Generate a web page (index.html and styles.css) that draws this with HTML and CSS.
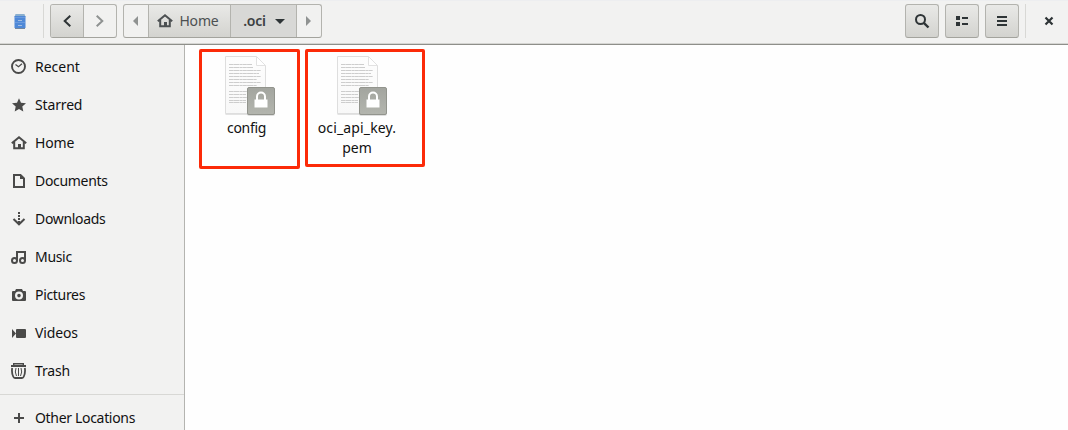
FILE: index.html
```html
<!DOCTYPE html>
<html lang="en">
<head>
<meta charset="utf-8">
<title>.oci</title>
<link rel="stylesheet" href="styles.css">
</head>
<body>
<svg class="defs" width="0" height="0">
  <defs>
    <linearGradient id="lockbg" x1="0" y1="0" x2="0" y2="1"><stop offset="0" stop-color="#a3a59f"/><stop offset="1" stop-color="#b3b5ae"/></linearGradient>
    <linearGradient id="paper" x1="0" y1="0" x2="0" y2="1"><stop offset="0" stop-color="#fdfdfd"/><stop offset="1" stop-color="#f8f8f8"/></linearGradient>
    <symbol id="home" viewBox="0 0 16 16"><path d="M.8 8.200 8 2.200l7.200 6M3.200 7v6.200h9.600V7" fill="none" stroke="currentColor" stroke-width="2"/><path d="M7 9h3v4H7z" fill="currentColor"/></symbol>
    <symbol id="file" viewBox="0 0 52 62">
      <path d="M1.500 1.500h31l9 9v48.500h-40z" fill="#bbb" opacity=".4"/>
      <path d="M1.500 .5h31l9 9v48h-40z" fill="url(#paper)" stroke="#dedede"/>
      <path d="M32.500 .5v9h9z" fill="#fff" stroke="#e2e2e2"/>
      <path d="M5 8.500h23M5 11.500h24M5 14.500h32M5 17.500h30M5 20.500h32M5 23.500h28M5 26.500h32M5 29.500h28M5 35.500h20M5 38.500h17M5 41.500h18M5 44.500h17M5 46.500h17" stroke="#cdcdcd" stroke-width="1" stroke-dasharray="4 .3 6 .3 3 .2"/>
      <rect x="23" y="32" width="28" height="28" rx="2" fill="#000" opacity=".12"/>
      <rect x="23.500" y="31.500" width="27" height="27" rx="1.500" fill="url(#lockbg)" stroke="#92948d"/>
      <path d="M33 44v-3.500a4 4 0 0 1 8 0V44" fill="none" stroke="#fff" stroke-width="2"/>
      <path d="M30.500 43.500h13v8h-13z" fill="#fff"/>
    </symbol>
  </defs>
</svg>
<div class="window">
  <header class="bar">
    <svg class="app" width="12" height="17" viewBox="0 0 12 17"><path d="M1.500 1h9l1 3H.5z" fill="#8aafcf"/><path d="M.5 3h11v12H.5z" fill="#4f89d7"/><path d="M1 9.500h10M1 4.500h10" stroke="#6a9ade"/><path d="M4 7.500h4M4 12.500h4" stroke="#a5bfe0"/><path d="M1 15.500h10" stroke="#73879e"/></svg>
    <span class="sep sep-left"></span>
    <div class="group nav">
      <span class="btn raised"><svg width="16" height="16" viewBox="0 0 16 16"><path d="M11.300 2.700 5.700 8l5.600 5.300" fill="none" stroke="#2e3436" stroke-width="2"/></svg></span>
      <span class="btn"><svg width="16" height="16" viewBox="0 0 16 16"><path d="m4.700 2.700 5.600 5.300-5.600 5.300" fill="none" stroke="#8f9291" stroke-width="2"/></svg></span>
    </div>
    <div class="group path">
      <span class="btn arrow"><svg width="5" height="10" viewBox="0 0 5 10"><path d="M5 0v10L0 5z" fill="#8f9291"/></svg></span>
      <span class="btn raised crumb"><svg width="16" height="16"><use href="#home"/></svg><span class="snug">Home</span></span>
      <span class="btn current"><b>.oci</b><svg width="10" height="5" viewBox="0 0 10 5"><path d="M0 0h10L5 5z" fill="#2e3436"/></svg></span>
      <span class="btn arrow"><svg width="5" height="10" viewBox="0 0 5 10"><path d="M0 0v10l5-5z" fill="#8f9291"/></svg></span>
    </div>
    <div class="tools">
      <span class="tool"><svg width="16" height="16" viewBox="0 0 16 16"><circle cx="6.500" cy="6.500" r="4.500" fill="none" stroke="#2e3436" stroke-width="2"/><path d="m9.800 9.800 4.700 4.700" stroke="#2e3436" stroke-width="2.400"/></svg></span>
      <span class="tool"><svg width="16" height="16" viewBox="0 0 16 16" fill="#2e3436"><path d="M2 3h4v4H2zM2 9h4v4H2zM8 4h6v2H8zM8 10h6v2H8z"/></svg></span>
      <span class="tool"><svg width="16" height="16" viewBox="0 0 16 16" fill="#2e3436"><path d="M3 3h10v2H3zM3 7h10v2H3zM3 11h10v2H3z"/></svg></span>
      <span class="sep"></span>
      <svg class="close" width="16" height="16" viewBox="0 0 16 16"><path d="m4.500 4.500 7 7m0-7-7 7" stroke="#2e3436" stroke-width="2.200"/></svg>
    </div>
  </header>
  <div class="body">
    <nav class="side">
      <div class="row"><svg width="16" height="16" viewBox="0 0 16 16" fill="none" stroke="currentColor"><circle cx="7.500" cy="7.500" r="6.500" stroke-width="1.900"/><path d="m4.500 5.500 3 2.300L11 4.800" stroke-width="1.200"/></svg><span>Recent</span></div>
      <div class="row"><svg width="16" height="16" viewBox="0 0 16 16"><path d="m8 1.200 2 4.500 5 .5-3.700 3.400 1 5L8 12l-4.300 2.600 1-5L1 6.200l5-.5z" fill="currentColor"/></svg><span class="snug">Starred</span></div>
      <div class="row"><svg width="16" height="16"><use href="#home"/></svg><span class="snug">Home</span></div>
      <div class="row"><svg width="16" height="16" viewBox="0 0 16 16"><path d="M3 2h6.500L13 5.500V14H3z" fill="none" stroke="currentColor" stroke-width="2"/><path d="M9 2v4h4z" fill="currentColor"/></svg><span class="tight">Documents</span></div>
      <div class="row"><svg width="16" height="16" viewBox="0 0 16 16" fill="none" stroke="currentColor" stroke-width="2"><path d="M8 1v2M8 4v2M8 7v2M8 10v3"/><path d="m2.500 8 5.500 5.300L13.500 8"/></svg><span class="tight">Downloads</span></div>
      <div class="row"><svg width="16" height="16" viewBox="0 0 16 16" fill="none" stroke="currentColor" stroke-width="2"><circle cx="3.500" cy="11.500" r="2.500"/><circle cx="11.500" cy="11.500" r="2.500"/><path d="M6 12V3h8v9"/></svg><span class="tight">Music</span></div>
      <div class="row"><svg width="16" height="16" viewBox="0 0 16 16"><path fill-rule="evenodd" d="M2 4h2l1-2h6l1 2h2q1 0 1 1v8q0 1-1 1H2q-1 0-1-1V5q0-1 1-1zm6 .5a4 4 0 1 0 0 8 4 4 0 0 0 0-8zM8 6.800a1.800 1.800 0 1 1 0 3.600 1.800 1.800 0 0 1 0-3.600z" fill="currentColor"/></svg><span class="tight">Pictures</span></div>
      <div class="row"><svg width="16" height="16" viewBox="0 0 16 16"><path d="m1 4 4 4.500L1 13zM6 4h8q1 0 1 1v7q0 1-1 1H6q-1 0-1-1V5q0-1 1-1z" fill="currentColor"/></svg><span class="snug">Videos</span></div>
      <div class="row"><svg width="16" height="16" viewBox="0 0 16 16" fill="none" stroke="currentColor"><path d="M0 3h15" stroke-width="2"/><path d="M2.700 2.500V.7h9.600v1.800" stroke-width="1.400"/><path d="M1.200 5q-.8 4.500 1 8.500.5 1.500 1.800 1.500h7q1.300 0 1.800-1.500 1.800-4 1-8.500" stroke-width="1.800"/><path d="M5 5q-1.600 4 .5 8M7.500 5v8M10 5q1.600 4-.5 8" stroke-width="1"/></svg><span class="snug">Trash</span></div>
      <div class="rule"></div>
      <div class="row"><svg width="16" height="16" viewBox="0 0 16 16"><path d="M3 8h10M8 3v10" stroke="currentColor" stroke-width="2"/></svg><span class="tight">Other Locations</span></div>
    </nav>
    <main class="files">
      <div class="item first"><svg width="52" height="62"><use href="#file"/></svg><span class="tight">config</span></div>
      <div class="item second"><svg width="52" height="62"><use href="#file"/></svg><span><span class="wide">oci_api_key.</span><br>pem</span></div>
    </main>
  </div>
</div>
</body>
</html>
```

FILE: styles.css
```css
* { box-sizing: border-box; }
body { margin: 0; font: 14px/20px "Noto Sans", sans-serif; color: #111; }
svg { display: block; flex: none; }
.defs { position: absolute; }
.window { width: 1068px; height: 430px; display: flex; flex-direction: column; overflow: hidden; background: #fefefe; }
.bar { height: 45px; flex: none; display: flex; align-items: flex-start; padding-top: 3px; background: #f2f2f1; border-top: 1px solid #edeef0; border-bottom: 1px solid #8e8f8a; box-shadow: inset 0 -1px #d5d5d2; }
.app { margin: 9px 0 0 14px; }
.sep { width: 1px; height: 34px; background: #d8d8d5; }
.sep-left { margin-left: 17px; }
.group { display: flex; height: 34px; border: 1px solid #b3b3ae; border-bottom-color: #a3a39d; border-radius: 3px; overflow: hidden; background: #f1f1f0; }
.nav { width: 67px; margin-left: 6px; }
.path { width: 199px; margin-left: 6px; }
.btn { display: flex; align-items: center; justify-content: center; border-right: 1px solid #b3b3ae; }
.btn:last-child { border-right: 0; }
.nav .btn { width: 33px; }
.raised, .tool { background: linear-gradient(#e9e9e7, #d3d3cf); }
.arrow { width: 25px; }
.crumb { width: 82px; flex: none; gap: 6px; padding-right: 2px; color: #4c5052; }
.current { width: 66px; flex: none; gap: 9px; padding-left: 2px; background: #d8d8d6; color: #3c4042; }
.current b { font-weight: 600; letter-spacing: -0.2px; }
.tools { margin-left: auto; display: flex; gap: 6px; }
.tool { width: 34px; height: 34px; border: 1px solid #b3b3ae; border-bottom-color: #a3a39d; border-radius: 3px; display: flex; align-items: center; justify-content: center; }
.close { margin: 9px 11px 0 9px; }
.body { flex: 1; display: flex; min-height: 0; }
.side { width: 185px; flex: none; padding-top: 3px; background: #f2f2f1; border-right: 1px solid #b4b4b0; }
.row { height: 38px; display: flex; align-items: center; gap: 8px; padding-left: 11px; }
.row svg { color: #4a4a49; }
.snug { letter-spacing: -0.15px; }
.tight { letter-spacing: -0.32px; }
.wide { letter-spacing: 0.15px; }
.rule { height: 1px; margin: 4px 0; background: #d8d8d5; }
.files { display: flex; align-items: flex-start; gap: 5px; padding: 4px 0 0 14px; }
.item { border: 3px solid #fc2a08; border-radius: 2px; display: flex; flex-direction: column; align-items: center; padding-top: 4px; text-align: center; }
.item svg { margin-left: 6px; }
.first { width: 101px; height: 120px; padding-right: 6px; }
.second { width: 120px; height: 118px; padding-right: 16px; }
.second svg { margin-left: 10px; }
```
